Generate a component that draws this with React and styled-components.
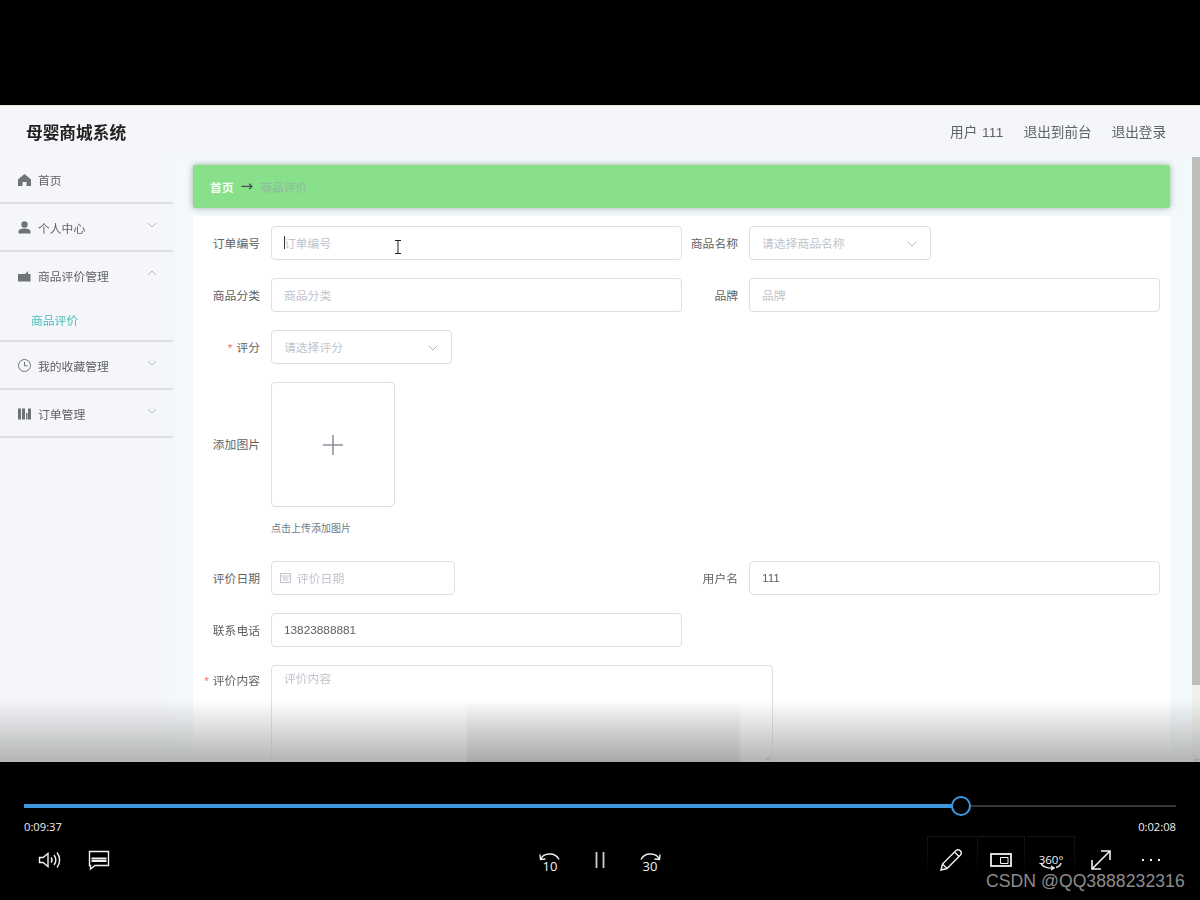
import React from 'react';
import styled, { createGlobalStyle } from 'styled-components';

const GlobalStyle = createGlobalStyle`
html, body {
  margin: 0;
  padding: 0;
  background: #000;
}
* {
  box-sizing: border-box;
}
`;

const Player = styled.div`
width: 1200px;
height: 900px;
background: #000;
display: flex;
flex-direction: column;
overflow: hidden;
font-family: 'Liberation Sans', 'Noto Sans CJK SC', sans-serif;
position: relative;`;

const TopBand = styled.div`
height: 105px;
flex: none;`;

const Frame = styled.div`
height: 657px;
flex: none;
position: relative;
overflow: hidden;
background: #f5f6fa;
border-top: 1px solid #e6e6de;`;

const Screen = styled.div`
height: 100%;
display: flex;
flex-direction: column;
filter: blur(0.55px);`;

const Header = styled.header`
height: 51px;
flex: none;
display: flex;
align-items: center;
justify-content: space-between;
padding: 0 34px 0 26px;`;

const Title = styled.div`
font-size: 16.7px;
font-weight: 700;
color: #222;`;

const HeaderNav = styled.nav`
display: flex;
gap: 20px;
margin-top: -2px;
font-size: 13.6px;
color: #5f6266;`;

const UserName = styled.span`
letter-spacing: 0.35px;`;

const Body = styled.div`
flex: 1;
display: flex;
min-height: 0;`;

const Sidebar = styled.aside`
width: 173px;
flex: none;
margin-top: -1px;`;

const MenuItem = styled.div`
height: 48px;
display: flex;
align-items: center;
padding: 0 16px 0 18px;
border-bottom: 2px solid #dcdee2;
font-size: 11.8px;
color: #606266;`;

const MenuGroup = styled.div`
border-bottom: 2px solid #dcdee2;

${MenuItem} {
  border-bottom: none;
  height: 47px;
}`;

const MenuIcon = styled.svg`
width: 13px;
height: 13px;
margin-right: 7px;
fill: #6f7276;
flex: none;`;

const MenuChevron = styled.svg`
width: 10px;
height: 6px;
margin-left: auto;
margin-top: -5px;
fill: none;
stroke: #b4b7bc;
stroke-width: 1;`;

const SubItem = styled.div`
height: 41px;
display: flex;
align-items: center;
padding-left: 31px;
font-size: 11.8px;
color: #46bdbd;`;

const Main = styled.main`
flex: 1;
background: #f3f8fb;
padding: 8px 30px 0 20px;
display: flex;
flex-direction: column;
min-width: 0;`;

const Breadcrumb = styled.div`
height: 43px;
flex: none;
background: #88e08a;
border-radius: 2px;
box-shadow: 0 0 6px rgba(60, 90, 60, 0.45);
display: flex;
align-items: center;
padding: 0 0 1px 17px;
font-size: 11.8px;`;

const CrumbHome = styled.span`
font-weight: 700;
color: #f4fff4;`;

const CrumbArrow = styled.span`
margin: 0 7px;
color: #40504a;
font-family: 'DejaVu Sans', sans-serif;
font-size: 15px;
line-height: 15px;`;

const CrumbCurrent = styled.span`
color: #8fb8a0;`;

const FormCard = styled.section`
flex: 1;
margin-top: 8px;
background: #fff;
padding-top: 10px;
display: flex;
flex-direction: column;
gap: 18px;`;

const Row = styled.div`
display: flex;
flex: none;
align-items: flex-start;`;

const Label = styled.label`
flex: none;
width: ${props => props.$width || 68}px;
height: ${props => props.$height || 34}px;
line-height: ${props => props.$height || 34}px;
padding: 1px 1px 0 0;
margin-right: 10px;
text-align: right;
font-size: 11.8px;
color: #606266;
white-space: nowrap;`;

const Star = styled.span`
color: #f56c6c;
margin-right: 4px;`;

const Box = styled.div`
flex: none;
width: ${props => props.$width}px;
height: 34px;
display: flex;
align-items: center;
padding: 0 13px 2px 12px;
border: 1px solid #dcdfe6;
border-radius: 4px;
background: #fff;
font-size: 11.8px;
color: #606266;`;

const Placeholder = styled.span`
color: #c0c4cc;`;

const Value = styled.span`
padding-top: 2px;`;

const Caret = styled.span`
width: 1px;
height: 13px;
background: #333;
margin-right: -1px;`;

const SelectArrow = styled.svg`
width: 10px;
height: 6px;
margin-left: auto;
margin-top: 3px;
fill: none;
stroke: #b4b7bc;
stroke-width: 1;`;

const DateIcon = styled.svg`
width: 11px;
height: 11px;
margin: 0 6px 0 -4px;
fill: none;
stroke: #c0c4cc;
stroke-width: 1;`;

const Upload = styled.div`
display: flex;
flex-direction: column;`;

const UploadBox = styled.div`
width: 124px;
height: 125px;
border: 1px solid #dcdfe6;
border-radius: 4px;
display: flex;
align-items: center;
justify-content: center;`;

const PlusIcon = styled.svg`
width: 20px;
height: 20px;
stroke: #8c939d;
stroke-width: 1.6;`;

const UploadTip = styled.div`
margin-top: 13px;
height: 23px;
font-size: 10px;
color: #6a7a8a;`;

const TextArea = styled.div`
flex: none;
width: 502px;
height: 100px;
padding: 3px 12px;
border: 1px solid #dcdfe6;
border-radius: 4px;
font-size: 11.8px;
line-height: 20px;
position: relative;`;

const ResizeGrip = styled.svg`
position: absolute;
right: 1px;
bottom: 3px;
width: 6px;
height: 6px;
stroke: #333;
stroke-width: 1;`;

const Scrollbar = styled.div`
position: absolute;
right: 0;
top: 51px;
bottom: 0;
width: 8px;
background: #f0f0ee;

&::after {
  content: '';
  position: absolute;
  left: 2px;
  bottom: 0;
  border-left: 3px solid transparent;
  border-right: 3px solid transparent;
  border-top: 3px solid #555;
}`;

const ScrollThumb = styled.div`
height: 528px;
background: #bdbdb9;`;

const BottomFade = styled.div`
position: absolute;
left: 0;
right: 0;
bottom: 0;
height: 62px;
background: linear-gradient(to bottom, rgba(172, 174, 172, 0), rgba(172, 174, 172, 0.92));`;

const BottomPatch = styled.div`
position: absolute;
left: 467px;
bottom: 0;
width: 273px;
height: 62px;
background: linear-gradient(to bottom, rgba(140, 140, 140, 0), rgba(140, 140, 140, 0.25));
border-bottom: 1px dashed #8b8b8b;
filter: blur(1px);`;

const TextCursor = styled.svg`
position: absolute;
left: 394px;
top: 134px;
width: 8px;
height: 14px;
fill: none;
stroke: #222;
stroke-width: 1;`;

const Controls = styled.div`
flex: 1;
display: flex;
flex-direction: column;
padding: 42px 24px 0;
color: #fff;`;

const Track = styled.div`
height: 4px;
display: flex;
align-items: center;
position: relative;
flex: none;
background: linear-gradient(#000 1px, #363636 1px, #363636 3px, #000 3px);`;

const TrackFill = styled.div`
height: 4px;
background: #3d97e0;`;

const Thumb = styled.div`
position: absolute;
top: -8px;
width: 20px;
height: 20px;
margin-left: -10px;
border-radius: 50%;
border: 2px solid #3d97e0;
background: #000;`;

const Times = styled.div`
display: flex;
justify-content: space-between;
margin-top: 11px;
font-family: 'Open Sans', 'Liberation Sans', sans-serif;
font-size: 11.2px;
line-height: 16px;
color: #eee;`;

const ButtonRow = styled.div`
display: grid;
grid-template-columns: 1fr auto 1fr;
margin-top: 3px;`;

const ButtonGroup = styled.div`
display: flex;
justify-content: ${props => props.$align || 'flex-start'};`;

const IconButton = styled.div`
width: 50px;
height: 44px;
display: flex;
align-items: center;
justify-content: center;
position: relative;
color: #f2f2f2;

${props => props.$framed && `
  &::before {
    content: '';
    position: absolute;
    inset: -2px 1px 2px 1px;
    border-style: solid;
    border-width: 1px ${props.$framed === 'left' ? '0' : '1px'} 0 ${props.$framed === 'right' ? '0' : '1px'};
    border-image: linear-gradient(#161616, #000) 1;
  }
`}`;

const Glyph = styled.svg`
width: 24px;
height: 24px;
fill: none;
stroke: currentColor;
stroke-width: 1.4;
position: relative;`;

const SeekLabel = styled.span`
position: absolute;
left: 0;
right: 0;
top: 21px;
text-align: center;
font-family: 'Open Sans', 'Liberation Sans', sans-serif;
font-size: 13px;
line-height: 14px;`;

const VrLabel = styled.span`
position: absolute;
left: 0;
right: 0;
top: 16px;
text-align: center;
font-family: 'Open Sans', 'Liberation Sans', sans-serif;
font-size: 11.5px;
line-height: 12px;`;

const Watermark = styled.div`
position: absolute;
left: 986px;
top: 870px;
font-family: 'Liberation Sans', sans-serif;
font-size: 17.6px;
line-height: 22px;
letter-spacing: 0.05px;
color: #8c8c8c;`;

const homeIcon = <path d="M6.5 1 L13 6.5 V13 H8.5 V9 H4.5 V13 H0 V6.5 Z" />;
const userIcon = (
  <>
    <circle cx="6.5" cy="3.5" r="3.2" />
    <path d="M0.5 12.5 V10.5 C0.5 8.5 3 7.5 6.5 7.5 C10 7.5 12.5 8.5 12.5 10.5 V12.5 Z" />
  </>
);
const walletIcon = <path d="M0 5 H7 L10 2 V5 H12.5 V12.5 H0 Z" />;
const barsIcon = <path d="M0 1.5 H3 V12.5 H0 Z M4 1.5 H7 V12.5 H4 Z M8 6 H9.5 V12.5 H8 Z M10 1.5 H13 V12.5 H10 Z" />;

const clockIcon = (
  <>
    <circle cx="6.5" cy="6.5" r="6" fill="none" stroke="#6f7276" />
    <path d="M6.5 3 V6.8 H9.5" fill="none" stroke="#6f7276" />
  </>
);

const Chevron = ({ up }) => (
  <MenuChevron viewBox="0 0 10 6">
    <path d={up ? 'M1 5 L5 1 L9 5' : 'M1 1 L5 5 L9 1'} />
  </MenuChevron>
);

const Menu = ({ icon, text, chevron }) => (
  <MenuItem>
    <MenuIcon viewBox="0 0 13 13">{icon}</MenuIcon>
    {text}
    {chevron && <Chevron up={chevron === 'up'} />}
  </MenuItem>
);

const SelectBox = ({ width, text }) => (
  <Box $width={width}>
    <Placeholder>{text}</Placeholder>
    <SelectArrow viewBox="0 0 10 6"><path d="M0.5 0.5 L5 5 L9.5 0.5" /></SelectArrow>
  </Box>
);

const App = () => (
  <Player>
    <GlobalStyle />
    <TopBand />
    <Frame>
      <Screen>
        <Header>
          <Title>母婴商城系统</Title>
          <HeaderNav>
            <UserName>用户 111</UserName>
            <span>退出到前台</span>
            <span>退出登录</span>
          </HeaderNav>
        </Header>
        <Body>
          <Sidebar>
            <Menu icon={homeIcon} text="首页" />
            <Menu icon={userIcon} text="个人中心" chevron="down" />
            <MenuGroup>
              <Menu icon={walletIcon} text="商品评价管理" chevron="up" />
              <SubItem>商品评价</SubItem>
            </MenuGroup>
            <Menu icon={clockIcon} text="我的收藏管理" chevron="down" />
            <Menu icon={barsIcon} text="订单管理" chevron="down" />
          </Sidebar>
          <Main>
            <Breadcrumb>
              <CrumbHome>首页</CrumbHome>
              <CrumbArrow>→</CrumbArrow>
              <CrumbCurrent>商品评价</CrumbCurrent>
            </Breadcrumb>
            <FormCard>
              <Row>
                <Label>订单编号</Label>
                <Box $width={411}><Caret /><Placeholder>订单编号</Placeholder></Box>
                <Label $width={57}>商品名称</Label>
                <SelectBox width={182} text="请选择商品名称" />
              </Row>
              <Row>
                <Label>商品分类</Label>
                <Box $width={411}><Placeholder>商品分类</Placeholder></Box>
                <Label $width={57}>品牌</Label>
                <Box $width={411}><Placeholder>品牌</Placeholder></Box>
              </Row>
              <Row>
                <Label><Star>*</Star>评分</Label>
                <SelectBox width={181} text="请选择评分" />
              </Row>
              <Row>
                <Label $height={125}>添加图片</Label>
                <Upload>
                  <UploadBox>
                    <PlusIcon viewBox="0 0 20 20"><path d="M10 0 V20 M0 10 H20" /></PlusIcon>
                  </UploadBox>
                  <UploadTip>点击上传添加图片</UploadTip>
                </Upload>
              </Row>
              <Row>
                <Label>评价日期</Label>
                <Box $width={184}>
                  <DateIcon viewBox="0 0 11 11">
                    <rect x="0.5" y="1.5" width="10" height="9" />
                    <path d="M0.5 4 H10.5 M2.5 6 H8.5 M2.5 8 H8.5" />
                  </DateIcon>
                  <Placeholder>评价日期</Placeholder>
                </Box>
                <Label $width={284}>用户名</Label>
                <Box $width={411}><Value>111</Value></Box>
              </Row>
              <Row>
                <Label>联系电话</Label>
                <Box $width={411}><Value>13823888881</Value></Box>
              </Row>
              <Row>
                <Label $height={30}><Star>*</Star>评价内容</Label>
                <TextArea>
                  <Placeholder>评价内容</Placeholder>
                  <ResizeGrip viewBox="0 0 6 6"><path d="M0.5 5.5 L5.5 0.5 M3.5 5.5 L5.5 3.5" /></ResizeGrip>
                </TextArea>
              </Row>
            </FormCard>
          </Main>
        </Body>
      </Screen>
      <Scrollbar><ScrollThumb /></Scrollbar>
      <TextCursor viewBox="0 0 8 14"><path d="M1 0.5 H7 M4 0.5 V13.5 M1 13.5 H7" /></TextCursor>
      <BottomFade />
      <BottomPatch />
    </Frame>
    <Controls>
      <Track>
        <TrackFill style={{ width: `${(937 / 1152) * 100}%` }} />
        <Thumb style={{ left: `${(937 / 1152) * 100}%` }} />
      </Track>
      <Times>
        <span>0:09:37</span>
        <span>0:02:08</span>
      </Times>
      <ButtonRow>
        <ButtonGroup>
          <IconButton>
            <Glyph viewBox="0 0 24 24">
              <path d="M2.5 9.5 H6 L11 5.5 V18.5 L6 14.5 H2.5 Z" />
              <path d="M14 9.5 C15.3 11 15.3 13 14 14.5 M17 7 C19.2 10 19.2 14 17 17 M20 4.5 C23.5 9 23.5 15 20 19.5" />
            </Glyph>
          </IconButton>
          <IconButton>
            <Glyph viewBox="0 0 24 24">
              <path d="M2.5 3.5 H21.5 V17.5 H8 L3.5 21 V17.5 H2.5 Z" />
              <path d="M4.5 10.5 H19.5 M4.5 13 H19.5" strokeWidth="1.8" />
            </Glyph>
          </IconButton>
        </ButtonGroup>
        <ButtonGroup $align="center">
          <IconButton>
            <Glyph viewBox="0 0 24 24">
              <path d="M3 11 C5 5 17 3.5 21 11.5 M2 6.5 L2.5 11.5 L7.5 11" />
            </Glyph>
            <SeekLabel>10</SeekLabel>
          </IconButton>
          <IconButton>
            <Glyph viewBox="0 0 24 24">
              <path d="M8.5 4 V20 M15.5 4 V20" stroke="#ccc" strokeWidth="1.8" />
            </Glyph>
          </IconButton>
          <IconButton>
            <Glyph viewBox="0 0 24 24">
              <path d="M21 11 C19 5 7 3.5 3 11.5 M22 6.5 L21.5 11.5 L16.5 11" />
            </Glyph>
            <SeekLabel>30</SeekLabel>
          </IconButton>
        </ButtonGroup>
        <ButtonGroup $align="flex-end">
          <IconButton $framed="left">
            <Glyph viewBox="0 0 24 24">
              <path d="M2 22 L3.5 16 L17 2.5 C18.5 1.5 20.5 2 21.5 3 C22.5 4.5 22.5 6 21.5 7 L8 20.5 Z M3.5 16 L8 20.5 M15.5 4 L20 8.5" />
            </Glyph>
          </IconButton>
          <IconButton $framed="both">
            <Glyph viewBox="0 0 24 24">
              <rect x="2" y="6" width="20" height="12" strokeWidth="1.8" />
              <path d="M11.5 9.5 H19 V15.5 H11.5 Z" strokeWidth="1" />
            </Glyph>
          </IconButton>
          <IconButton $framed="right">
            <VrLabel>360°</VrLabel>
            <Glyph viewBox="0 0 24 24">
              <path d="M2 15 C3 19 9 20.5 14 20 M22 15 C21.5 17 19 19 17 19.5 M12 18 L15 20 L12 22" />
            </Glyph>
          </IconButton>
          <IconButton>
            <Glyph viewBox="0 0 24 24">
              <path d="M3 21 L21 3 M12 3 H21 V12 M3 12 V21 H12" strokeWidth="1.6" />
            </Glyph>
          </IconButton>
          <IconButton>
            <Glyph viewBox="0 0 24 24">
              <path d="M3 12 H5 M11 12 H13 M19 12 H21" strokeWidth="2" />
            </Glyph>
          </IconButton>
        </ButtonGroup>
      </ButtonRow>
    </Controls>
    <Watermark>CSDN @QQ3888232316</Watermark>
  </Player>
);

export default App;
